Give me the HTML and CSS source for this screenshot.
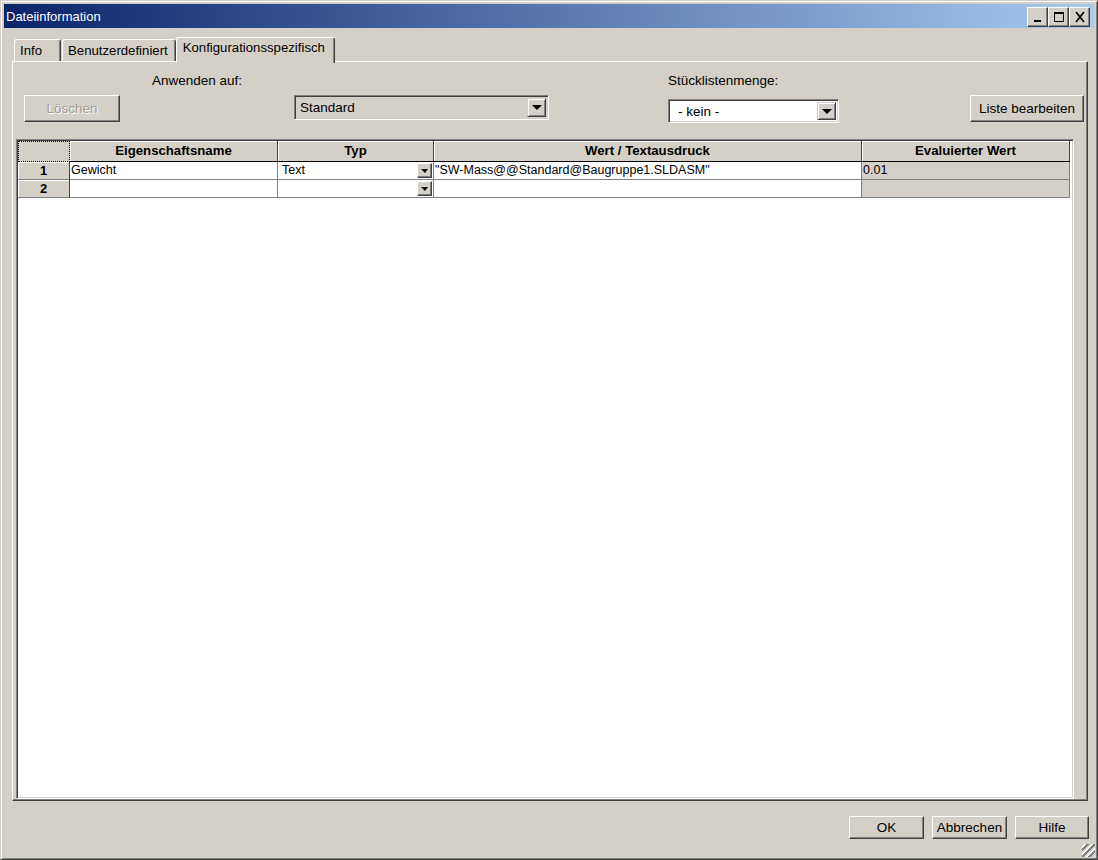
FILE: index.html
```html
<!DOCTYPE html>
<html lang="de">
<head>
  <meta charset="UTF-8">
  <title>Dateiinformation</title>
  <link rel="stylesheet" href="styles.css">
</head>
<body>
<div class="window">
  <!--Titelleiste-->
  <div class="titlebar">
    <span class="title">Dateiinformation</span>
    <div class="capBtns">
      <a href="javascript:;" class="capBtn">
        <svg width="12" height="12" viewBox="0 0 12 12"><rect x="2" y="9" width="7" height="2" fill="#000"/></svg>
      </a>
      <a href="javascript:;" class="capBtn">
        <svg width="12" height="12" viewBox="0 0 12 12"><path d="M1.5 1.5h9v9h-9z" fill="none" stroke="#000"/><rect x="1" y="1" width="10" height="2" fill="#000"/></svg>
      </a>
      <a href="javascript:;" class="capBtn">
        <svg width="12" height="12" viewBox="0 0 12 12"><path d="M2 1l8 10M10 1l-8 10" stroke="#000" stroke-width="1.6" fill="none"/></svg>
      </a>
    </div>
  </div>

  <!--Reiter-->
  <div class="tabs">
    <a href="javascript:;" class="tab">Info</a>
    <a href="javascript:;" class="tab">Benutzerdefiniert</a>
    <a href="javascript:;" class="tab active">Konfigurationsspezifisch</a>
  </div>

  <div class="panel">
    <div class="toolbar">
      <span class="label labelApply">Anwenden auf:</span>
      <span class="label labelQty">Stücklistenmenge:</span>
      <button class="btn btnDelete" disabled>Löschen</button>
      <div class="combo comboConfig">
        <span class="comboText">Standard</span>
        <span class="dropBtn"><i class="arrow"></i></span>
      </div>
      <div class="combo comboQty">
        <span class="comboText">- kein -</span>
        <span class="dropBtn"><i class="arrow"></i></span>
      </div>
      <button class="btn btnList">Liste bearbeiten</button>
    </div>

    <!--Eigenschaften-->
    <div class="gridBox">
      <div class="grid">
        <div class="hcell corner"></div>
        <div class="hcell">Eigenschaftsname</div>
        <div class="hcell">Typ</div>
        <div class="hcell">Wert / Textausdruck</div>
        <div class="hcell">Evaluierter Wert</div>

        <div class="rowhead">1</div>
        <div class="cell">Gewicht</div>
        <div class="cell typ"><span>Text</span><span class="miniDrop"><i class="arrow small"></i></span></div>
        <div class="cell">"SW-Mass@@Standard@Baugruppe1.SLDASM"</div>
        <div class="cell eval">0.01</div>

        <div class="rowhead">2</div>
        <div class="cell"></div>
        <div class="cell typ"><span></span><span class="miniDrop"><i class="arrow small"></i></span></div>
        <div class="cell"></div>
        <div class="cell eval"></div>
      </div>
    </div>
  </div>

  <div class="footer">
    <button class="btn btnOk">OK</button>
    <button class="btn btnCancel">Abbrechen</button>
    <button class="btn btnHelp">Hilfe</button>
  </div>
  <div class="grip"></div>
</div>
</body>
</html>
```

FILE: styles.css
```css
* {
  margin: 0;
  padding: 0;
  box-sizing: border-box;
}

body {
  font-family: "Liberation Sans", Arial, sans-serif;
  font-size: 13.5px;
  color: #000;
  background: #d4d0c8;
}

a {
  color: #000;
  text-decoration: none;
}

.window {
  position: relative;
  width: 1098px;
  height: 860px;
  padding: 3px;
  background: #d4d0c8;
  border: 1px solid;
  border-color: #d4d0c8 #404040 #404040 #d4d0c8;
  box-shadow: inset 1px 1px #fff, inset -1px -1px #808080;
  display: flex;
  flex-direction: column;
}

/*Titelleiste*/
.titlebar {
  height: 24px;
  flex: none;
  display: flex;
  align-items: center;
  justify-content: space-between;
  padding: 0 4px 0 2px;
  background: linear-gradient(to right, #0a246a, #a6caf0);
}

.titlebar .title {
  color: #fff;
  font-size: 13px;
}

.capBtns {
  display: flex;
  margin-top: 2px;
}

.capBtn {
  width: 21px;
  height: 20px;
  display: flex;
  align-items: center;
  justify-content: center;
  background: #d4d0c8;
  border: 1px solid;
  border-color: #fff #404040 #404040 #fff;
  box-shadow: inset -1px -1px #808080;
}

/*Reiter*/
.tabs {
  flex: none;
  height: 24px;
  margin-top: 9px;
  padding-left: 10px;
  display: flex;
  align-items: flex-end;
}

.tab {
  min-width: 47px;
  height: 22px;
  padding: 2px 7px 0 5px;
  font-size: 13.2px;
  line-height: 18px;
  background: #d4d0c8;
  border: 1px solid;
  border-bottom: none;
  border-color: #fff #404040 #fff #fff;
  border-radius: 3px 3px 0 0;
  box-shadow: inset -1px 0 #808080;
}

.tab + .tab {
  margin-left: 1px;
}

.tab.active {
  position: relative;
  z-index: 1;
  height: 26px;
  margin-left: 0;
  margin-bottom: -2px;
  padding: 1px 9px 0 6px;
}

.panel {
  flex: none;
  height: 740px;
  margin: 0 6px 0 8px;
  padding-bottom: 1px;
  background: #d4d0c8;
  border: 1px solid;
  border-color: #fff #404040 #404040 #fff;
  box-shadow: inset -1px -1px #808080;
  display: flex;
  flex-direction: column;
}

.toolbar {
  flex: none;
  display: grid;
  grid-template-columns: 11px 96px 174px 255px 119px 171px 1fr 114px;
  grid-template-rows: 16px 28px;
  row-gap: 6px;
  padding: 11px 3px 0 0;
}

.label {
  grid-row: 1;
  line-height: 16px;
  white-space: nowrap;
}

.labelApply {
  grid-column: 3 / 5;
  margin-left: 32px;
}

.labelQty {
  grid-column: 6 / 8;
}

.btn {
  height: 27px;
  font-family: "Liberation Sans", Arial, sans-serif;
  font-size: 13.5px;
  color: #000;
  background: #d4d0c8;
  border: 1px solid;
  border-color: #fff #404040 #404040 #fff;
  box-shadow: inset -1px -1px #808080;
  cursor: pointer;
}

.btnDelete {
  grid-row: 2;
  grid-column: 2;
  color: #a09c94;
  text-shadow: 1px 1px #fff;
}

.btnList {
  grid-row: 2;
  grid-column: 8;
}

.combo {
  grid-row: 2;
  display: flex;
  align-items: center;
  justify-content: space-between;
  border: 1px solid;
  border-color: #808080 #fff #fff #808080;
  box-shadow: inset 1px 1px #404040, inset -1px -1px #d4d0c8;
  padding: 2px 2px 2px 5px;
}

.comboConfig {
  grid-column: 4;
  height: 25px;
  background: #d4d0c8;
}

.comboQty {
  grid-column: 6;
  height: 24px;
  margin-top: 4px;
  padding-left: 9px;
  background: #fff;
}

.dropBtn {
  width: 19px;
  height: 100%;
  display: flex;
  align-items: center;
  justify-content: center;
  background: #d4d0c8;
  border: 1px solid;
  border-color: #d4d0c8 #404040 #404040 #d4d0c8;
  box-shadow: inset 1px 1px #fff, inset -1px -1px #808080;
}

.arrow {
  display: block;
  width: 0;
  height: 0;
  border-left: 5px solid transparent;
  border-right: 5px solid transparent;
  border-top: 5px solid #000;
}

.arrow.small {
  border-left-width: 4px;
  border-right-width: 3px;
  border-top-width: 4px;
}

/*Tabelle*/
.gridBox {
  flex: 1;
  margin: 16px 13px 0 3px;
  background: #fff;
  border: 1px solid;
  border-color: #808080 #fff #fff #808080;
  box-shadow: inset 1px 1px #404040, inset -1px -1px #d4d0c8;
  padding: 1px;
}

.grid {
  display: grid;
  grid-template-columns: 52px 208px 156px 428px 208px;
  grid-template-rows: 21px 18px 18px;
  font-size: 12.5px;
}

.hcell {
  background: #d4d0c8;
  border-right: 1px solid #404040;
  border-bottom: 1px solid #000;
  box-shadow: inset 1px 1px #fff;
  font-size: 13.2px;
  font-weight: bold;
  text-align: center;
  line-height: 20px;
}

.hcell.corner {
  border: 1px dotted #000;
  box-shadow: none;
}

.rowhead {
  background: #d4d0c8;
  border-right: 1px solid #404040;
  border-bottom: 1px solid #808080;
  box-shadow: inset 1px 1px #fff;
  font-size: 13px;
  font-weight: bold;
  text-align: center;
  line-height: 17px;
}

.cell {
  background: #fff;
  border-right: 1px solid #808080;
  border-bottom: 1px solid #808080;
  padding-left: 1px;
  line-height: 17px;
  white-space: nowrap;
  overflow: hidden;
}

.cell.eval {
  background: #d4d0c8;
}

.cell.typ {
  display: flex;
  justify-content: space-between;
  align-items: center;
  padding-left: 4px;
}

.miniDrop {
  width: 15px;
  height: 15px;
  margin-right: 1px;
  display: flex;
  align-items: center;
  justify-content: center;
  background: #d4d0c8;
  border: 1px solid;
  border-color: #fff #404040 #404040 #fff;
  box-shadow: inset -1px -1px #808080;
}

.footer {
  flex: 1;
  display: flex;
  justify-content: flex-end;
  align-items: flex-start;
  gap: 8px;
  padding: 15px 5px 0 0;
}

.footer .btn {
  width: 75px;
  height: 23px;
}

.footer .btnHelp {
  width: 74px;
}

/*Groessenaenderung*/
.grip {
  position: absolute;
  right: 2px;
  bottom: 2px;
  width: 13px;
  height: 13px;
  background: repeating-linear-gradient(135deg, transparent 0, transparent 2px, #fff 2px, #fff 3px, #808080 3px, #808080 5px);
}
```
